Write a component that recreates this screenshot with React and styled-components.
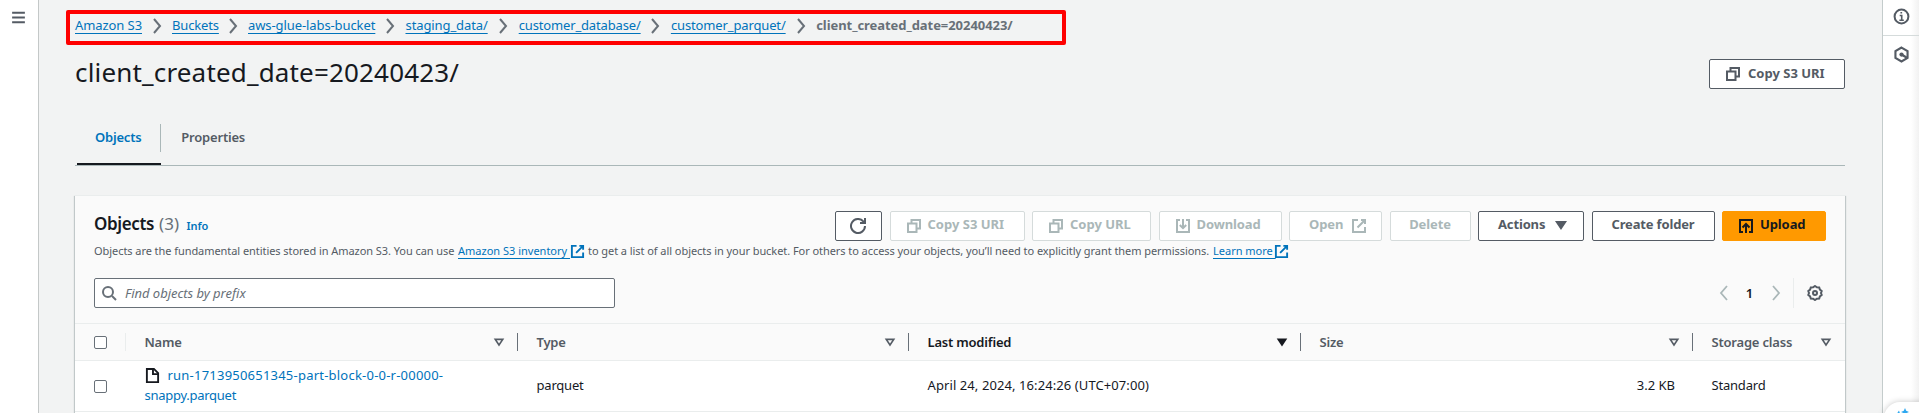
import React from 'react';
import styled, { createGlobalStyle, css } from 'styled-components';

const Global = createGlobalStyle`
  *, *::before, *::after { box-sizing: border-box; }
  html, body { margin: 0; padding: 0; overflow: hidden; }
  body {
    background: #f2f3f3;
    color: #16191f;
    font-family: "Noto Sans", "Open Sans", sans-serif;
    font-size: 13px;
    line-height: 20px;
  }
`;

const Shell = styled.div`
  display: flex;
  width: 100%;
  height: 413px;
  overflow: hidden;
  position: relative;
`;

const NavRail = styled.aside`
  flex: 0 0 39px;
  padding: 9px 0 0 10px;
  background: #fff;
  border-right: 1px solid #c4c8c8;
  color: #545b64;
`;

const ToolsRail = styled.aside`
  flex: 0 0 37px;
  background: linear-gradient(to right, #fff 28px, #f0f0f0 37px);
  border-left: 1px solid #c4cccc;
  color: #545b64;
`;

const ToolSlot = styled.div`
  height: ${p => p.$h}px;
  padding: ${p => p.$top}px 0 0 10px;
  border-bottom: ${p => (p.$line ? '1px solid #d5dbdb' : 'none')};
`;

const AssistBubble = styled.div`
  position: absolute;
  left: 1884px;
  top: 402px;
  width: 56px;
  height: 56px;
  border-radius: 16px;
  background: #fff;
  box-shadow: 0 0 6px rgba(0, 0, 0, 0.22);
  padding: 5px 0 0 12px;
`;

const Main = styled.main`
  flex: 1;
  padding: 0 37px 0 36px;
  min-width: 0;
`;

const Svg = styled.svg`
  display: block;
  flex: none;
  fill: none;
  stroke: currentColor;
  stroke-width: ${p => p.$w || 2};
`;

const Breadcrumbs = styled.nav`
  position: relative;
  display: flex;
  align-items: center;
  height: 22px;
  margin-top: 14px;
  line-height: 22px;
`;

const Highlight = styled.div`
  position: absolute;
  left: -9px;
  top: -4px;
  width: 1000px;
  height: 35px;
  border: 4px solid #fe0000;
  border-radius: 2px;
`;

const linkLine = css`
  color: #0073bb;
  text-decoration: underline;
  text-decoration-thickness: 1px;
  text-underline-offset: 3px;
  text-decoration-skip-ink: none;
`;

const Crumb = styled.a`
  ${linkLine}
  width: ${p => p.$w}px;
  white-space: nowrap;
  letter-spacing: ${p => p.$ls}px;
`;

const CrumbArrow = styled.span`
  width: 30px;
  padding: 2px 0 0 6.5px;
  color: #687078;
`;

const CrumbCurrent = styled.span`
  font-weight: 700;
  color: #687078;
  letter-spacing: -0.06px;
  white-space: nowrap;
`;

const TitleRow = styled.header`
  display: flex;
  justify-content: space-between;
  height: 88px;
  padding-top: 18px;
`;

const Title = styled.h1`
  margin: 0;
  font-size: 26px;
  font-weight: 400;
  line-height: 36px;
  letter-spacing: 0.17px;
`;

const TitleAction = styled.div`
  padding-top: 5px;
`;

const tones = {
  normal: css`background: #fff; border-color: #545b64; color: #545b64;`,
  disabled: css`background: #fff; border-color: #d5dbdb; color: #aab7b8;`,
  primary: css`background: #ff9900; border-color: #ff9900; color: #16191f;`,
};

const Btn = styled.button`
  display: flex;
  gap: ${p => p.$gap ?? 8}px;
  justify-content: ${p => (p.$center ? 'center' : 'flex-start')};
  flex: none;
  width: ${p => p.$w}px;
  height: 30px;
  padding: 2px 0 0 ${p => p.$pl || 0}px;
  border: 1px solid;
  border-radius: 2px;
  font: 700 13px/22px "Noto Sans", "Open Sans", sans-serif;
  letter-spacing: ${p => p.$ls || 0}px;
  white-space: nowrap;
  ${p => tones[p.$tone || 'normal']}
  svg { margin-top: ${p => p.$it ?? 4}px; }
`;

const Tabs = styled.div`
  display: flex;
  height: 42px;
  border-bottom: 1px solid #aab7b8;
`;

const Tab = styled.div`
  position: relative;
  width: ${p => p.$w}px;
  padding: 2px 0 0 ${p => p.$pl}px;
  line-height: 22px;
  font-weight: 600;
  letter-spacing: -0.2px;
  color: ${p => (p.$active ? '#0073bb' : '#545b64')};
  ${p => p.$active && css`
    height: 28px;
    border-right: 1px solid #aab7b8;
    &::after {
      content: '';
      position: absolute;
      left: 2px;
      right: -1px;
      top: 39px;
      height: 2px;
      background: #16191f;
    }
  `}
`;

const Card = styled.section`
  margin-top: 29px;
  height: 240px;
  background: #fff;
  border-top: 1px solid #eaeded;
  box-shadow: 1px 1px 1px 0 rgba(0, 28, 36, 0.2), -1px 1px 1px 0 rgba(0, 28, 36, 0.2);
`;

const CardHead = styled.div`
  height: 127px;
  padding: 15px 19px 0;
  background: #fafafa;
`;

const HeadRow = styled.div`
  display: flex;
  justify-content: space-between;
  height: 32px;
`;

const Heading = styled.h2`
  display: flex;
  align-items: baseline;
  height: 24px;
  margin: 2px 0 0;
  font-size: 17px;
  line-height: 22px;
  font-weight: 600;
  letter-spacing: -0.36px;
`;

const Count = styled.span`
  margin-left: 5px;
  width: 27.5px;
  font-weight: 400;
  color: #687078;
  letter-spacing: 0;
`;

const InfoLink = styled.a`
  font-size: 11px;
  font-weight: 600;
  color: #0073bb;
  letter-spacing: -0.1px;
`;

const Actions = styled.div`
  display: flex;
  gap: 7.5px;
  ${Btn} {
    padding-top: 1px;
    svg { margin-top: 5px; }
  }
`;

const Description = styled.p`
  display: flex;
  margin: 0;
  font-size: 11px;
  line-height: 16px;
  letter-spacing: -0.06px;
  color: #545b64;
  white-space: nowrap;
`;

const Phrase = styled.span`
  width: ${p => p.$w}px;
`;

const ExtLink = styled.a`
  ${linkLine}
  white-space: pre;
  letter-spacing: ${p => p.$ls || 0}px;
  width: ${p => p.$w}px;
`;

const ExtIcon = styled.span`
  width: ${p => p.$w}px;
  padding-top: 1px;
  color: #0073bb;
`;

const FilterRow = styled.div`
  display: flex;
  justify-content: space-between;
  height: 30px;
  margin-top: 19px;
`;

const Search = styled.div`
  display: flex;
  align-items: center;
  gap: 8px;
  width: 521px;
  padding-left: 6px;
  background: #fff;
  border: 1px solid #687078;
  border-radius: 2px;
  color: #687078;
  font-style: italic;
  letter-spacing: -0.03px;
`;

const Pager = styled.div`
  display: flex;
  align-items: center;
  color: #aab7b8;
`;

const PageNumber = styled.span`
  width: 36px;
  padding-bottom: 1px;
  text-align: center;
  font-weight: 600;
  color: #16191f;
`;

const Preferences = styled.div`
  display: flex;
  align-items: center;
  height: 30px;
  margin-left: 9px;
  padding: 0 3.5px 0 13px;
  border-left: 1px solid #eaeded;
  color: #545b64;
`;

const gridRow = css`
  display: grid;
  grid-template-columns: 51px 392px 391px 392px 392px 152px;
  align-items: center;
`;

const TableHead = styled.div`
  ${gridRow}
  height: 38px;
  background: #fafafa;
  border-top: 1px solid #eaeded;
  border-bottom: 1px solid #eaeded;
  font-weight: 600;
  color: #545b64;
`;

const HeadCell = styled.div`
  display: flex;
  align-items: center;
  justify-content: space-between;
  height: 18px;
  padding: 0 ${p => (p.$last ? 13 : 12)}px 0 18.5px;
  border-right: ${p => (p.$last ? 'none' : '1px solid #687078')};
  letter-spacing: -0.2px;
  color: ${p => (p.$sorted ? '#16191f' : 'inherit')};
`;

const CheckCell = styled.div`
  display: flex;
  align-items: center;
  height: 18px;
  padding-left: 19px;
  border-right: ${p => (p.$head ? '1px solid #eaeded' : 'none')};
`;

const Checkbox = styled.span`
  width: 13px;
  height: 13px;
  border: 1px solid #687078;
  border-radius: 2px;
  background: #fff;
`;

const Row = styled.div`
  ${gridRow}
  height: 51px;
  background: #fff;
  border-bottom: 1px solid #eaeded;
`;

const Cell = styled.div`
  padding: 0 18px 2px 18.5px;
  letter-spacing: ${p => p.$ls || 0}px;
  text-align: ${p => (p.$end ? 'right' : 'left')};
  white-space: nowrap;
`;

const FileLine = styled.div`
  display: flex;
  align-items: center;
  gap: 8px;
  color: #16191f;
`;

const FileLink = styled.a`
  color: #0073bb;
  letter-spacing: ${p => p.$ls}px;
`;

const paths = {
  copy: <><path d="M2 5.5h8.5V14H2z" /><path d="M5.5 5.5V2H14v8.5h-3.5" /></>,
  external: <><path d="M14 9v5H2V2h5" /><path d="M10 2h4v4M6.5 9.5 14 2" /></>,
  download: <><path d="M5 2H2v12h12V2h-3" /><path d="M8 1v9M4.8 7 8 10.2 11.2 7" /></>,
  upload: <><path d="M5 14H2V2h12v12h-3" /><path d="M8 15V6.5M4.5 9.5 8 6l3.5 3.5" /></>,
  refresh: <><path d="M15 8a7 7 0 1 1-1.7-4.6L15 5" /><path d="M10 5h5V0" /></>,
  search: <><circle cx="7" cy="7" r="5" /><path d="m11 11 4 4" /></>,
  file: <><path d="M2 1h7.5L14 5.500V15H2z" /><path d="M8.5 1v5.500H14" /></>,
  left: <path d="M11 1 5 8l6 7" />,
  right: <path d="m5 1 6 7-6 7" />,
  menu: <path d="M2 3.5h12M2 8h12M2 12.5h12" />,
  info: <><circle cx="8" cy="8" r="6.5" /><path d="M6.3 7h1.900v4.500M6 11.500h4.200M7 4.500h1.600" strokeWidth="1.5" /></>,
  hex: <><path d="M8 1.500 13.700 4.800v6.400L8 14.500 2.300 11.200V4.800z" /><circle cx="8" cy="8" r="2" fill="currentColor" stroke="none" /><path d="m8 8 5.500 3.300" /></>,
  gear: <><circle cx="8" cy="8" r="2" /><path d="m8 1 1.9 1.3 2.300.1.700 2.200L14.700 6 14 8l.7 2-1.800 1.400-.7 2.200-2.300.1L8 15l-1.900-1.300-2.300-.1-.7-2.200L1.300 10 2 8l-.7-2 1.800-1.400.7-2.200 2.300-.1z" /></>,
  sort: <path d="M3 4.5h10L8 12z" />,
  sorted: <path d="M3 4.5h10L8 12z" fill="currentColor" />,
};

const Icon = ({ name, size = 16, w }) => (
  <Svg width={size} height={size} viewBox="0 0 16 16" $w={w}>{paths[name]}</Svg>
);

const crumbs = [
  ['Amazon S3', 67, -0.08],
  ['Buckets', 46, -0.15],
  ['aws-glue-labs-bucket', 127.5, -0.09],
  ['staging_data/', 83.2, -0.1],
  ['customer_database/', 122.2, -0.15],
  ['customer_parquet/', 115.3, -0.13],
];

const SortIcon = ({ active }) => <Icon name={active ? 'sorted' : 'sort'} size={12} w={2.2} />;

export default function App() {
  return (
    <>
      <Global />
      <Shell>
        <NavRail><Icon name="menu" size={17} w={1.9} /></NavRail>
        <Main>
          <Breadcrumbs>
            {crumbs.map(([label, w, ls]) => (
              <React.Fragment key={label}>
                <Crumb $w={w} $ls={ls}>{label}</Crumb>
                <CrumbArrow><Icon name="right" /></CrumbArrow>
              </React.Fragment>
            ))}
            <CrumbCurrent>client_created_date=20240423/</CrumbCurrent>
            <Highlight />
          </Breadcrumbs>
          <TitleRow>
            <Title>client_created_date=20240423/</Title>
            <TitleAction>
              <Btn $w={136} $pl={15} $gap={7}><Icon name="copy" />Copy S3 URI</Btn>
            </TitleAction>
          </TitleRow>
          <Tabs>
            <Tab $active $w={86} $pl={20}>Objects</Tab>
            <Tab $w={104} $pl={20.3}>Properties</Tab>
          </Tabs>
          <Card>
            <CardHead>
              <HeadRow>
                <Heading>Objects<Count>(3)</Count><InfoLink>Info</InfoLink></Heading>
                <Actions>
                  <Btn $w={47.5} $center><Icon name="refresh" /></Btn>
                  <Btn $w={135} $tone="disabled" $pl={15} $gap={6}><Icon name="copy" />Copy S3 URI</Btn>
                  <Btn $w={119} $tone="disabled" $pl={15} $gap={6}><Icon name="copy" />Copy URL</Btn>
                  <Btn $w={123} $tone="disabled" $pl={15} $gap={6} $ls={-0.1}><Icon name="download" />Download</Btn>
                  <Btn $w={93} $tone="disabled" $pl={19} $ls={-0.1}>Open<Icon name="external" /></Btn>
                  <Btn $w={81} $tone="disabled" $center $ls={-0.1}>Delete</Btn>
                  <Btn $w={106} $pl={19} $gap={9} $ls={-0.15}>Actions<Icon name="sorted" size={14} /></Btn>
                  <Btn $w={123} $center $ls={-0.15}>Create folder</Btn>
                  <Btn $w={104} $tone="primary" $pl={15} $gap={6} $ls={-0.1}><Icon name="upload" />Upload</Btn>
                </Actions>
              </HeadRow>
              <Description>
                <Phrase $w={364}>Objects are the fundamental entities stored in Amazon S3. You can use</Phrase>
                <ExtLink $w={112}>Amazon S3 inventory </ExtLink>
                <ExtIcon $w={18}><Icon name="external" size={15} /></ExtIcon>
                <Phrase $w={625}>to get a list of all objects in your bucket. For others to access your objects, you’ll need to explicitly grant them permissions.</Phrase>
                <ExtLink $w={61}>Learn more </ExtLink>
                <ExtIcon $w={16}><Icon name="external" size={15} /></ExtIcon>
              </Description>
              <FilterRow>
                <Search><Icon name="search" />Find objects by prefix</Search>
                <Pager>
                  <Icon name="left" w={1.8} />
                  <PageNumber>1</PageNumber>
                  <Icon name="right" w={1.8} />
                  <Preferences><Icon name="gear" /></Preferences>
                </Pager>
              </FilterRow>
            </CardHead>
            <TableHead>
              <CheckCell $head><Checkbox /></CheckCell>
              <HeadCell>Name<SortIcon /></HeadCell>
              <HeadCell>Type<SortIcon /></HeadCell>
              <HeadCell $sorted>Last modified<SortIcon active /></HeadCell>
              <HeadCell>Size<SortIcon /></HeadCell>
              <HeadCell $last>Storage class<SortIcon /></HeadCell>
            </TableHead>
            <Row>
              <CheckCell><Checkbox /></CheckCell>
              <Cell>
                <FileLine><Icon name="file" size={15} /><FileLink $ls={0.22}>run-1713950651345-part-block-0-0-r-00000-</FileLink></FileLine>
                <FileLink $ls={-0.27}>snappy.parquet</FileLink>
              </Cell>
              <Cell $ls={-0.2}>parquet</Cell>
              <Cell $ls={0.09}>April 24, 2024, 16:24:26 (UTC+07:00)</Cell>
              <Cell $end>3.2 KB</Cell>
              <Cell $ls={-0.2}>Standard</Cell>
            </Row>
          </Card>
        </Main>
        <ToolsRail>
          <ToolSlot $h={36} $top={8} $line><Icon name="info" size={17} w={1.9} /></ToolSlot>
          <ToolSlot $h={36} $top={10}><Icon name="hex" size={17} w={2} /></ToolSlot>
        </ToolsRail>
        <AssistBubble>
          <svg width="14" height="14" viewBox="0 0 14 14">
            <path d="M9 0 10.2 2.8 13 4 10.2 5.2 9 8 7.8 5.2 5 4 7.8 2.8z" fill="#2ea8f0" />
            <path d="M3 2.5 4 5.5 7 7 4 8.5 3 12 0 7z" fill="#2ea8f0" />
          </svg>
        </AssistBubble>
      </Shell>
    </>
  );
}
